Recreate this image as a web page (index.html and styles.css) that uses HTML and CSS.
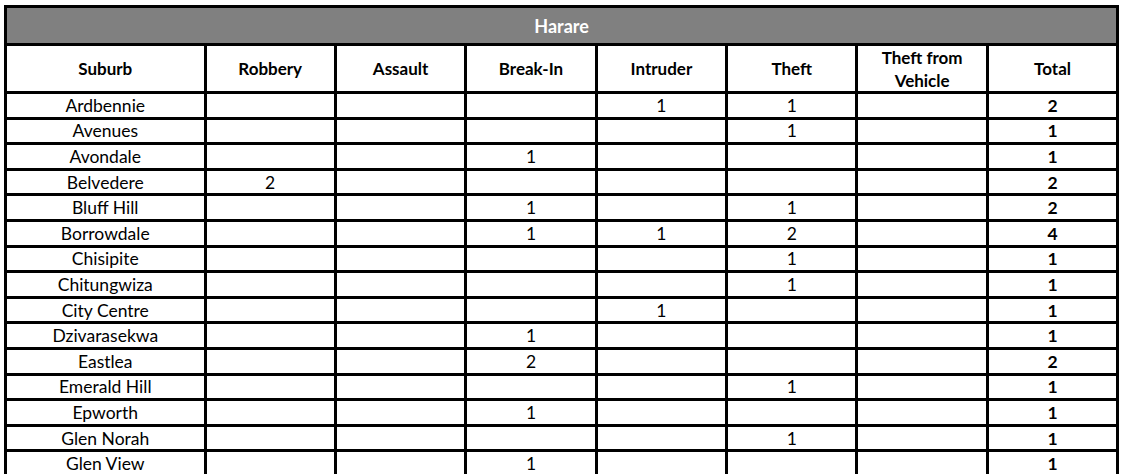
FILE: index.html
```html
<!DOCTYPE html>
<html>
<head>
<meta charset="utf-8">
<link rel="stylesheet" href="styles.css">
</head>
<body>
<div class="sheet">
  <div class="title">Harare</div>
  <div class="hd">Suburb</div>
  <div class="hd">Robbery</div>
  <div class="hd">Assault</div>
  <div class="hd">Break-In</div>
  <div class="hd">Intruder</div>
  <div class="hd">Theft</div>
  <div class="hd">Theft from<br>Vehicle</div>
  <div class="hd">Total</div>

  <div class="c">Ardbennie</div><div class="c"></div><div class="c"></div><div class="c"></div><div class="c">1</div><div class="c">1</div><div class="c"></div><div class="c t">2</div>
  <div class="c">Avenues</div><div class="c"></div><div class="c"></div><div class="c"></div><div class="c"></div><div class="c">1</div><div class="c"></div><div class="c t">1</div>
  <div class="c">Avondale</div><div class="c"></div><div class="c"></div><div class="c">1</div><div class="c"></div><div class="c"></div><div class="c"></div><div class="c t">1</div>
  <div class="c">Belvedere</div><div class="c">2</div><div class="c"></div><div class="c"></div><div class="c"></div><div class="c"></div><div class="c"></div><div class="c t">2</div>
  <div class="c">Bluff Hill</div><div class="c"></div><div class="c"></div><div class="c">1</div><div class="c"></div><div class="c">1</div><div class="c"></div><div class="c t">2</div>
  <div class="c">Borrowdale</div><div class="c"></div><div class="c"></div><div class="c">1</div><div class="c">1</div><div class="c">2</div><div class="c"></div><div class="c t">4</div>
  <div class="c">Chisipite</div><div class="c"></div><div class="c"></div><div class="c"></div><div class="c"></div><div class="c">1</div><div class="c"></div><div class="c t">1</div>
  <div class="c">Chitungwiza</div><div class="c"></div><div class="c"></div><div class="c"></div><div class="c"></div><div class="c">1</div><div class="c"></div><div class="c t">1</div>
  <div class="c">City Centre</div><div class="c"></div><div class="c"></div><div class="c"></div><div class="c">1</div><div class="c"></div><div class="c"></div><div class="c t">1</div>
  <div class="c">Dzivarasekwa</div><div class="c"></div><div class="c"></div><div class="c">1</div><div class="c"></div><div class="c"></div><div class="c"></div><div class="c t">1</div>
  <div class="c">Eastlea</div><div class="c"></div><div class="c"></div><div class="c">2</div><div class="c"></div><div class="c"></div><div class="c"></div><div class="c t">2</div>
  <div class="c">Emerald Hill</div><div class="c"></div><div class="c"></div><div class="c"></div><div class="c"></div><div class="c">1</div><div class="c"></div><div class="c t">1</div>
  <div class="c">Epworth</div><div class="c"></div><div class="c"></div><div class="c">1</div><div class="c"></div><div class="c"></div><div class="c"></div><div class="c t">1</div>
  <div class="c">Glen Norah</div><div class="c"></div><div class="c"></div><div class="c"></div><div class="c"></div><div class="c">1</div><div class="c"></div><div class="c t">1</div>
  <div class="c">Glen View</div><div class="c"></div><div class="c"></div><div class="c">1</div><div class="c"></div><div class="c"></div><div class="c"></div><div class="c t">1</div>
</div>
</body>
</html>
```
FILE: styles.css
```css
html, body {
  margin: 0;
  padding: 0;
  background: #ffffff;
}
body {
  font-family: "Lato", "Open Sans", sans-serif;
  color: #000;
  overflow: hidden;
}
.sheet {
  margin: 5px 0 0 4px;
  display: grid;
  grid-template-columns: 196.5px repeat(7, 127.4px);
  grid-template-rows: 35px 45px;
  grid-auto-rows: 22.6px;
  gap: 3px;
  padding: 3px;
  background: #000;
  width: max-content;
}
.title {
  grid-column: 1 / -1;
  background: #808080;
  color: #fff;
  font-weight: 700;
  font-size: 18px;
  display: flex;
  align-items: center;
  justify-content: center;
}
.hd {
  background: #fff;
  font-weight: 700;
  font-size: 17px;
  line-height: 23px;
  display: flex;
  align-items: center;
  justify-content: center;
  text-align: center;
}
.c {
  background: #fff;
  font-size: 17.5px;
  line-height: 20px;
  padding-top: 1px;
  display: flex;
  align-items: center;
  justify-content: center;
}
.t {
  font-weight: 700;
}
```
